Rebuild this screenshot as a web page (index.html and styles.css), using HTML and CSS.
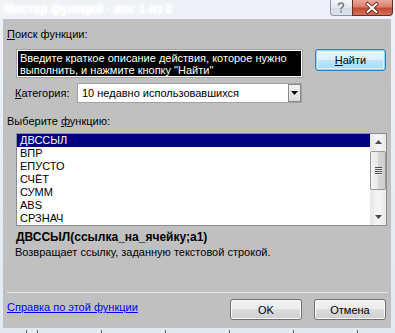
FILE: index.html
```html
<!DOCTYPE html>
<html lang="ru">
<head>
<meta charset="utf-8">
<link rel="stylesheet" href="styles.css">
</head>
<body>
<div class="window">
  <div class="titlebar">
    <span class="title">Мастер функций - шаг 1 из 2</span>
    <div class="caption-btns">
      <div class="cbtn help">
        <svg width="22" height="16" viewBox="0 0 22 16"><path d="M8.5 5.5 Q8.5 3 11 3 Q13.5 3 13.5 5.3 Q13.5 6.8 11.8 7.6 Q11 8 11 9.5" fill="none" stroke="#7a7a7a" stroke-width="1.6"/><rect x="10.2" y="10.8" width="1.7" height="1.7" fill="#7a7a7a"/></svg>
      </div>
      <div class="cbtn close">
        <svg width="41" height="16" viewBox="0 0 41 16"><path d="M16 4 L25 12 M25 4 L16 12" stroke="#5a2418" stroke-width="3.6" stroke-linecap="square"/><path d="M16 4 L25 12 M25 4 L16 12" stroke="#ffffff" stroke-width="2" stroke-linecap="square"/></svg>
      </div>
    </div>
  </div>
  <div class="client">
    <div class="label"><u>П</u>оиск функции:</div>
    <div class="search-row">
      <div class="search">
        <div class="search-inner">Введите краткое описание действия, которое нужно выполнить, и нажмите кнопку "Найти"</div>
      </div>
      <button class="btn btn-default"><u>Н</u>айти</button>
    </div>
    <div class="cat-row">
      <span class="cat-label"><u>К</u>атегория:</span>
      <div class="combo">
        <span class="combo-text">10 недавно использовавшихся</span>
        <span class="combo-btn"><svg width="7" height="4" viewBox="0 0 7 4"><path d="M0 0 H7 L3.5 4 Z" fill="#000"/></svg></span>
      </div>
    </div>
    <div class="label label2">Выберите <u>ф</u>ункцию:</div>
    <div class="list">
      <div class="items">
        <div class="item selected">ДВССЫЛ</div>
        <div class="item">ВПР</div>
        <div class="item">ЕПУСТО</div>
        <div class="item">СЧЁТ</div>
        <div class="item">СУММ</div>
        <div class="item">ABS</div>
        <div class="item">СРЗНАЧ</div>
      </div>
      <div class="scrollbar">
        <div class="sb-arrow"><svg width="7" height="4" viewBox="0 0 7 4"><path d="M0 4 H7 L3.5 0 Z" fill="#4a4a4a"/></svg></div>
        <div class="sb-thumb">
          <span class="grip"></span><span class="grip"></span><span class="grip"></span><span class="grip"></span>
        </div>
        <div class="sb-track"></div>
        <div class="sb-arrow"><svg width="7" height="4" viewBox="0 0 7 4"><path d="M0 0 H7 L3.5 4 Z" fill="#4a4a4a"/></svg></div>
      </div>
    </div>
    <div class="sig">ДВССЫЛ(ссылка_на_ячейку;a1)</div>
    <div class="desc">Возвращает ссылку, заданную текстовой строкой.</div>
    <div class="sep"></div>
    <div class="footer">
      <a class="help-link" href="#">Справка по этой функции</a>
      <button class="btn btn-ok">OK</button>
      <button class="btn btn-cancel">Отмена</button>
    </div>
  </div>
  <div class="strip"><div class="ticks"></div></div>
</div>
</body>
</html>
```
FILE: styles.css
```css
html, body {
  margin: 0;
  padding: 0;
}
body {
  width: 395px;
  height: 333px;
  overflow: hidden;
  font-family: "Liberation Sans", Arial, sans-serif;
  font-size: 11px;
  color: #000;
}
.window {
  width: 395px;
  height: 333px;
  background: linear-gradient(to bottom, #eef2f7 0%, #e2e9f1 100%);
  display: flex;
  flex-direction: column;
}
.titlebar {
  height: 19px;
  display: flex;
  align-items: flex-start;
  flex-shrink: 0;
}
.title {
  color: #ffffff;
  font-weight: bold;
  font-size: 12px;
  line-height: 19px;
  padding-left: 4px;
  text-shadow: 0 0 4px #ffffff, 0 0 8px #ffffff;
  white-space: nowrap;
}
.caption-btns {
  margin-left: auto;
  margin-right: 2px;
  display: flex;
}
.cbtn {
  height: 16px;
  box-sizing: border-box;
  display: flex;
}
.help {
  width: 22px;
  border: 1px solid #8a96a4;
  border-top: none;
  border-right: none;
  border-radius: 0 0 0 4px;
  background: linear-gradient(to bottom, #f4f6f9 0%, #e4e8ee 50%, #d4dae2 51%, #dde3ea 100%);
}
.close {
  width: 41px;
  border: 1px solid #6b2a20;
  border-top: none;
  border-radius: 0 0 4px 0;
  background: linear-gradient(to bottom, #e9a99b 0%, #d8806d 45%, #c24a31 55%, #d2725c 100%);
}
.help svg { margin-left: -1px; }
.close svg { margin-left: -1px; }

.client {
  flex: 1;
  margin: 0 4px 0 3px;
  background: #c0c0c0;
  padding: 9px 0 0 4px;
  display: flex;
  flex-direction: column;
}
.label {
  line-height: 13px;
  height: 13px;
}
.label2 {
  margin-top: 12px;
}
.search-row {
  margin-top: 8px;
  display: flex;
  align-items: flex-start;
  gap: 12px;
  margin-left: 9px;
}
.search {
  width: 287px;
  height: 29px;
  box-sizing: border-box;
  border: 1px solid #a2a2a2;
  padding: 1px;
  background: #ffffff;
}
.search-inner {
  background: #000000;
  color: #fffff0;
  height: 100%;
  padding: 1px 0 0 2px;
  box-sizing: border-box;
  line-height: 12px;
}
.btn {
  font-family: "Liberation Sans", Arial, sans-serif;
  font-size: 11px;
  color: #000;
  box-sizing: border-box;
  height: 22px;
  width: 72px;
  padding: 0;
  border: 1px solid #707070;
  border-radius: 3px;
  background: linear-gradient(to bottom, #f2f2f2 0%, #ebebeb 49%, #dddddd 50%, #cfcfcf 100%);
  box-shadow: inset 0 0 0 1px #fbfbfb;
}
.btn-default {
  width: 71px;
  border-color: #3c7fb1;
  background: linear-gradient(to bottom, #eaf6fd 0%, #d9f0fc 49%, #bee6fd 50%, #a7d9f5 100%);
  box-shadow: inset 0 0 0 1px #8ed3f4, inset 0 0 0 2px #dff2fc;
}
.cat-row {
  margin-top: 5px;
  display: flex;
  align-items: center;
  margin-left: 8px;
  height: 20px;
}
.cat-label {
  width: 62px;
  line-height: 13px;
}
.combo {
  width: 225px;
  height: 20px;
  box-sizing: border-box;
  border: 1px solid #a2a2a2;
  background: #ffffff;
  display: flex;
  align-items: center;
}
.combo-text {
  flex: 1;
  padding-left: 4px;
  line-height: 13px;
}
.combo-btn {
  width: 13px;
  height: 18px;
  box-sizing: border-box;
  border: 1px solid #8a8a8a;
  background: linear-gradient(to bottom, #f4f4f4, #dcdcdc);
  display: flex;
  align-items: center;
  justify-content: center;
}
.list {
  margin-top: 5px;
  margin-left: 9px;
  width: 371px;
  height: 93px;
  box-sizing: border-box;
  border: 1px solid #8c8c8c;
  background: #ffffff;
  display: flex;
}
.items {
  flex: 1;
}
.item {
  height: 13px;
  line-height: 13px;
  padding-left: 3px;
}
.item.selected {
  background: #000080;
  color: #ffffff;
}
.scrollbar {
  width: 16px;
  background: linear-gradient(to right, #e6e6e6, #f4f4f4 40%, #f4f4f4 60%, #e8e8e8);
  display: flex;
  flex-direction: column;
}
.sb-arrow {
  height: 16px;
  display: flex;
  align-items: center;
  justify-content: center;
  flex-shrink: 0;
}
.sb-thumb {
  margin-top: 1px;
  height: 39px;
  box-sizing: border-box;
  border: 1px solid #979797;
  border-radius: 2px;
  background: linear-gradient(to right, #f3f3f3 0%, #e8e8e8 50%, #d6d6d6 51%, #cfcfcf 100%);
  display: flex;
  flex-direction: column;
  align-items: center;
  justify-content: center;
  gap: 1px;
  flex-shrink: 0;
}
.grip {
  width: 7px;
  height: 1px;
  background: #4f4f4f;
  box-shadow: 0 1px 0 #f0f0f0;
}
.sb-track {
  flex: 1;
}
.sig {
  margin-top: 5px;
  margin-left: 9px;
  font-weight: bold;
  font-size: 12px;
  line-height: 13px;
}
.desc {
  margin-top: 2px;
  margin-left: 8px;
  line-height: 13px;
}
.sep {
  margin-top: 33px;
  width: 381px;
  height: 1px;
  background: #e6e6e6;
}
.footer {
  margin-top: 6px;
  display: flex;
  align-items: flex-start;
}
.help-link {
  color: #0000ff;
  text-decoration: underline;
  line-height: 13px;
  margin-top: 2px;
  width: 223px;
}
.btn-ok {
  width: 72px;
  height: 21px;
}
.btn-cancel {
  width: 72px;
  height: 21px;
  margin-left: 12px;
}
.strip {
  height: 5px;
  flex-shrink: 0;
}
.ticks {
  margin-top: 2px;
  height: 3px;
  background: repeating-linear-gradient(to right, #606060 0, #606060 1px, transparent 1px, transparent 64px);
  background-position: 37px 0;
}
```
